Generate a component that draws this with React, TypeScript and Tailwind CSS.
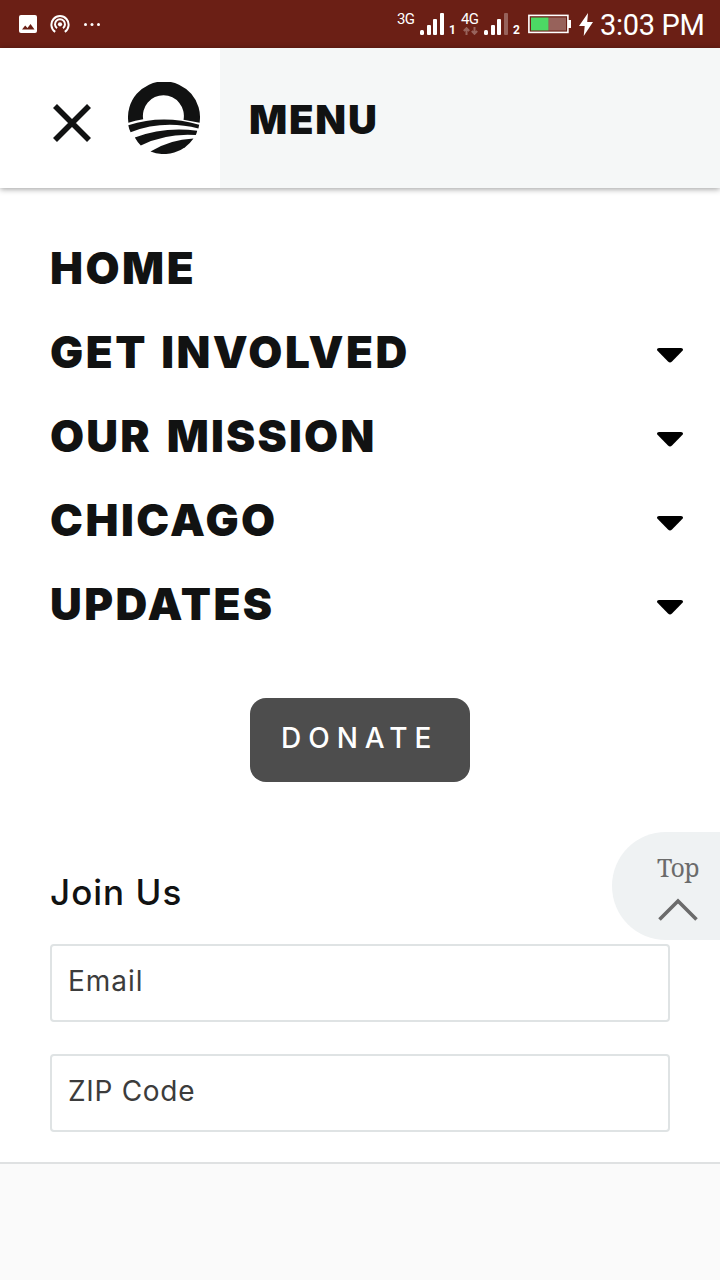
import React from "react";

const menuItems = [
  { title: "HOME", tracking: "tracking-[2.5px]", expandable: false },
  { title: "GET INVOLVED", tracking: "tracking-[2.5px] [word-spacing:2px]", expandable: true },
  { title: "OUR MISSION", tracking: "tracking-[2.2px] [word-spacing:4px]", expandable: true },
  { title: "CHICAGO", tracking: "tracking-[2.5px]", expandable: true },
  { title: "UPDATES", tracking: "tracking-[2.4px]", expandable: true },
];

const fields = [
  { label: "Email", tracking: "tracking-[1px]" },
  { label: "ZIP Code", tracking: "tracking-[0.7px]" },
];

function SignalBars({ dimLast }: { dimLast?: boolean }) {
  return (
    <svg className="h-[22px] w-6" viewBox="0 0 24 22" fill="#fff">
      <rect x="0" y="17" width="4" height="5" rx="1.5" />
      <rect x="7" y="12" width="4" height="10" rx="1" />
      <rect x="13" y="6" width="4" height="16" rx="1" />
      <rect x="20" y="0" width="4" height="22" rx="1" opacity={dimLast ? 0.3 : 1} />
    </svg>
  );
}

function StatusBar() {
  return (
    <div className="flex h-12 items-center justify-between bg-[#6b1f15] pl-[19px] pr-4 text-white">
      <div className="flex items-center">
        <svg className="h-[18px] w-[18px]" viewBox="0 0 18 18">
          <rect width="18" height="18" rx="2" fill="#fff" />
          <path d="M3 14.5L6.2 10.5L8.5 13L11.5 9L15.5 14.5Z" fill="#6b1f15" />
        </svg>
        <svg className="ml-[13px] h-5 w-5" viewBox="0 0 20 20" fill="none" stroke="#fff" strokeWidth="2">
          <path d="M5.2 17.8A8.6 8.6 0 1 1 14.8 17.8" />
          <path d="M7 14.2A5 5 0 1 1 13 14.2" />
          <circle cx="10" cy="10.3" r="2.1" fill="#fff" stroke="none" />
        </svg>
        <svg className="ml-[13px] h-[3px] w-[18px]" viewBox="0 0 18 3" fill="#fff">
          <circle cx="2.5" cy="1.5" r="1.5" />
          <circle cx="9" cy="1.5" r="1.5" />
          <circle cx="15.5" cy="1.5" r="1.5" />
        </svg>
      </div>

      <div className="flex h-full items-start">
        <span className="mt-3 w-[23px] text-[15px] leading-[15px] tracking-[-0.7px]">3G</span>
        <div className="mt-[13px]"><SignalBars /></div>
        <span className="ml-[5px] mt-[25px] w-[11px] text-[12px] font-bold leading-[11px]">1</span>
        <div className="mt-3 w-6">
          <p className="ml-px text-[15px] leading-[15px] tracking-[-0.7px]">4G</p>
          <svg className="ml-[3px] h-2 w-[15px] opacity-30" viewBox="0 0 15 8" fill="none" stroke="#fff" strokeWidth="2">
            <path d="M3.5 8V2M0.8 4L3.5 1.2L6.2 4M11.5 0V6M8.8 4L11.5 6.8L14.2 4" />
          </svg>
        </div>
        <div className="mt-[13px]"><SignalBars dimLast /></div>
        <span className="ml-[5px] mt-[25px] w-[15px] text-[12px] font-bold leading-[11px]">2</span>
        <svg className="mt-[14px] h-5 w-[43px]" viewBox="0 0 43 20">
          <rect x="0.9" y="1.4" width="39" height="17" fill="none" stroke="#fff" strokeWidth="1.6" />
          <rect x="3" y="3.5" width="17.5" height="13" fill="#4cd964" />
          <rect x="20.5" y="3.5" width="17.5" height="13" fill="#fff" opacity="0.3" />
          <rect x="40" y="6" width="3" height="8" fill="#fff" />
        </svg>
        <svg className="ml-2 mt-[13px] h-[23px] w-[14px]" viewBox="0 0 14 23" fill="#fff">
          <path d="M9 0L0 13H5.7L4.7 23L14 9H8.2Z" />
        </svg>
        <span className="ml-[7px] mt-[9px] w-[104px] whitespace-nowrap text-[29px] leading-8 tracking-[-0.3px]">3:03 PM</span>
      </div>
    </div>
  );
}

function Logo() {
  return (
    <svg className="h-[72px] w-[72px]" viewBox="0 0 72 72" fill="#111212">
      <path d="M0.4 40.7A36 36 0 1 1 71.6 40.7L55.5 37.8A20.5 20.5 0 1 0 15.2 37.3Q7 38.4 0.4 40.7Z" />
      <path d="M0.3 43.2Q35 31.8 71.2 42.8L70.4 46.4Q35 37.7 2.6 50.2Q1 47 0.3 43.2Z" />
      <path d="M6.8 55.6Q36 44.5 69.2 48.8Q68.8 51 67.8 53Q38 51 12.8 63.4Q9.3 60.2 6.8 55.6Z" />
      <path d="M22.5 69.5Q42 57.5 65.5 56.5A36 36 0 0 1 22.5 69.5Z" />
    </svg>
  );
}

function Header() {
  return (
    <header className="relative flex h-[140px] bg-white shadow-[0_1px_6px_rgba(0,0,0,0.4)]">
      <div className="flex w-[220px] pl-[53px]">
        <svg className="mt-14 h-[38px] w-[38px]" viewBox="0 0 38 38" stroke="#111212" strokeWidth="5.6">
          <path d="M2 2L36 36M36 2L2 36" />
        </svg>
        <div className="ml-[37px] mt-[34px]"><Logo /></div>
      </div>
      <div className="flex-1 bg-[#f5f7f7] pl-[29px] pt-[52px]">
        <h1 className="text-[40px] font-black leading-10 tracking-[1.8px]">MENU</h1>
      </div>
    </header>
  );
}

export default function App() {
  return (
    <div className="relative flex h-[1280px] w-[720px] flex-col overflow-hidden bg-[#fafafa] font-['Inter',sans-serif] text-[#111212]">
      <div className="font-['Roboto',sans-serif]"><StatusBar /></div>
      <Header />

      <main className="h-[976px] border-b-2 border-[#dfe1e2] bg-white">
        <nav className="pl-[50px] pr-[36px] pt-[38px]">
          {menuItems.map((item) => (
            <div key={item.title} className="flex h-[84px] items-center justify-between">
              <span className={`whitespace-nowrap text-[44px] font-black leading-[84px] ${item.tracking}`}>{item.title}</span>
              {item.expandable && (
                <svg className="mt-[7px] h-[15px] w-7" viewBox="0 0 28 15" fill="#000">
                  <path d="M3 0H25Q28 0.3 26.5 2.8L16 13.5Q14 15.5 12 13.5L1.5 2.8Q0 0.3 3 0Z" />
                </svg>
              )}
            </div>
          ))}
        </nav>

        <button className="mt-[52px] ml-[250px] flex h-[84px] w-[220px] rounded-[16px] bg-[#4d4d4d] pl-[31px] pt-[24px] text-[28px] font-medium leading-8 tracking-[7px] text-white">
          DONATE
        </button>

        <form className="mt-[88px] px-[50px]">
          <h2 className="text-[35px] font-medium leading-[44px] tracking-[1px]">Join Us</h2>
          <div className="mt-[30px] flex flex-col gap-8">
            {fields.map((field) => (
              <label key={field.label} className="block h-[78px] rounded-[4px] border-2 border-[#dfe3e4] pl-4 pt-[19px] text-[28px] leading-8 text-[#3c3c3c]">
                <span className={field.tracking}>{field.label}</span>
              </label>
            ))}
          </div>
        </form>
      </main>

      <a className="absolute right-0 top-[832px] h-[108px] w-[108px] rounded-l-full bg-[#eff2f3] pl-[45px] pt-[19px] font-['Noto_Serif','DejaVu_Serif',serif] text-[#6b6b6b]">
        <span className="block text-[25px] leading-8 tracking-[-0.6px]">Top</span>
        <svg className="ml-[1px] mt-[14px] h-6 w-10" viewBox="0 0 40 24" fill="none" stroke="#6b6b6b" strokeWidth="3.6">
          <path d="M1.5 22.5L20 4L38.5 22.5" />
        </svg>
      </a>
    </div>
  );
}
